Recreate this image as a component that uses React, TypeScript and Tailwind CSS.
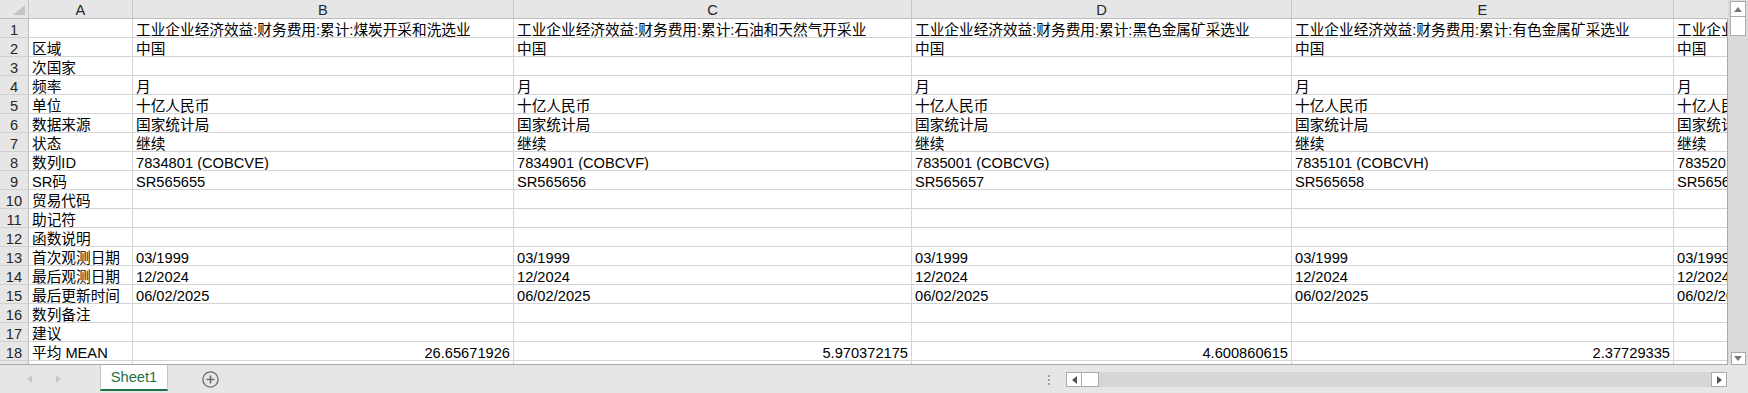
import React from "react";

const W = ["w-[104px]", "w-[381px]", "w-[398px]", "w-[380px]", "w-[382px]", "w-[382px]"];
const LETTERS = ["A", "B", "C", "D", "E", "F"];

const series = [
  { name: "煤炭开采和洗选业", id: "7834801 (COBCVE)", sr: "SR565655", mean: "26.65671926" },
  { name: "石油和天然气开采业", id: "7834901 (COBCVF)", sr: "SR565656", mean: "5.970372175" },
  { name: "黑色金属矿采选业", id: "7835001 (COBCVG)", sr: "SR565657", mean: "4.600860615" },
  { name: "有色金属矿采选业", id: "7835101 (COBCVH)", sr: "SR565658", mean: "2.37729335" },
  { name: "非金属矿采选业", id: "7835201 (COBCVI)", sr: "SR565659", mean: "1.084512307" },
];

const labels = [
  "",
  "区域",
  "次国家",
  "频率",
  "单位",
  "数据来源",
  "状态",
  "数列ID",
  "SR码",
  "贸易代码",
  "助记符",
  "函数说明",
  "首次观测日期",
  "最后观测日期",
  "最后更新时间",
  "数列备注",
  "建议",
  "平均 MEAN",
  "方差",
];

function valuesFor(s: (typeof series)[number]): string[] {
  return [
    "工业企业经济效益:财务费用:累计:" + s.name,
    "中国",
    "",
    "月",
    "十亿人民币",
    "国家统计局",
    "继续",
    s.id,
    s.sr,
    "",
    "",
    "",
    "03/1999",
    "12/2024",
    "06/02/2025",
    "",
    "",
    s.mean,
    "",
  ];
}

const colValues = series.map(valuesFor);

function Cell({ w, text, right }: { w: string; text: string; right?: boolean }) {
  return (
    <div
      className={`${w} shrink-0 h-[19px] border-r border-b border-[#d4d4d4] px-[3px] pt-[2px] leading-[18px] overflow-hidden whitespace-nowrap text-black ${
        right ? "text-right" : "text-left"
      }`}
    >
      {text}
    </div>
  );
}

function Row({ idx }: { idx: number }) {
  return (
    <div className="flex h-[19px]">
      <div className="w-[29px] shrink-0 h-[19px] bg-[#e6e6e6] border-r border-b border-r-[#bdbdbd] border-b-[#d0d0d0] text-center pt-[2px] leading-[18px] text-[#262626]">
        {idx + 1}
      </div>
      <Cell w={W[0]} text={labels[idx]} />
      {colValues.map((vals, c) => (
        <Cell key={c} w={W[c + 1]} text={vals[idx]} right={idx === 17} />
      ))}
    </div>
  );
}

function TriUp() {
  return (
    <svg width="8" height="5" viewBox="0 0 8 5">
      <path d="M0 5 L4 0 L8 5 Z" fill="#7a7a7a" />
    </svg>
  );
}
function TriDown() {
  return (
    <svg width="8" height="5" viewBox="0 0 8 5">
      <path d="M0 0 L4 5 L8 0 Z" fill="#7a7a7a" />
    </svg>
  );
}
function TriLeft({ color = "#555" }: { color?: string }) {
  return (
    <svg width="5" height="8" viewBox="0 0 5 8">
      <path d="M5 0 L0 4 L5 8 Z" fill={color} />
    </svg>
  );
}
function TriRight({ color = "#555" }: { color?: string }) {
  return (
    <svg width="5" height="8" viewBox="0 0 5 8">
      <path d="M0 0 L5 4 L0 8 Z" fill={color} />
    </svg>
  );
}

export default function App() {
  return (
    <div className="w-[1748px] h-[393px] overflow-hidden bg-[#e6e6e6] flex flex-col font-['Liberation_Sans','Noto_Sans_CJK_SC',sans-serif] text-[14.67px]">
      <div className="flex h-[365px] shrink-0">
        {/* grid */}
        <div className="w-[1728px] shrink-0 flex flex-col bg-white">
          <div className="flex h-[19px] shrink-0 overflow-hidden bg-[#e6e6e6]">
            <div className="w-[29px] shrink-0 h-[19px] border-r border-b border-r-[#c6c6c6] border-b-[#bdbdbd] flex items-start justify-end pt-[5px] pr-[3px]">
              <svg width="12" height="10" viewBox="0 0 12 10">
                <path d="M12 0 L12 10 L0 10 Z" fill="#c4c4c4" />
              </svg>
            </div>
            {LETTERS.map((l, i) => (
              <div
                key={l}
                className={`${W[i]} shrink-0 h-[19px] border-r border-b border-r-[#c6c6c6] border-b-[#bdbdbd] text-center pt-[1px] leading-[18px] text-[#262626]`}
              >
                {l}
              </div>
            ))}
          </div>
          <div className="flex-1 overflow-hidden border-r border-b border-[#a8a8a8] flex flex-col">
            {labels.map((_, i) => (
              <Row key={i} idx={i} />
            ))}
          </div>
        </div>
        {/* vertical scrollbar */}
        <div className="w-[20px] shrink-0 bg-[#dadada] flex flex-col items-center">
          <div className="mt-[1px] w-[16px] h-[16px] bg-white border border-[#ababab] flex items-center justify-center">
            <TriUp />
          </div>
          <div className="w-[16px] h-[19px] bg-white border border-t-0 border-[#ababab]" />
          <div className="flex-1" />
          <div className="w-[15px] h-[13px] bg-white border border-[#ababab] flex items-center justify-center">
            <TriDown />
          </div>
        </div>
      </div>

      {/* tab bar */}
      <div className="flex h-[28px] shrink-0 items-start">
        <div className="w-[100px] shrink-0 h-[26px] flex items-center pl-[27px] gap-[24px] pt-[1px]">
          <TriLeft color="#c8c8c8" />
          <TriRight color="#c8c8c8" />
        </div>
        <div className="w-[68px] shrink-0 h-[26px] bg-white border-x border-[#c6c6c6] border-b-2 border-b-[#217346] text-[#217346] text-center leading-[22px] pt-[1px]">
          Sheet1
        </div>
        <div className="ml-[34px] mt-[6px] w-[17px] h-[17px] shrink-0">
          <svg width="17" height="17" viewBox="0 0 17 17">
            <circle cx="8.5" cy="8.5" r="7.6" fill="none" stroke="#6a6a6a" strokeWidth="1.3" />
            <path d="M8.5 4.5 V12.5 M4.5 8.5 H12.5" stroke="#6a6a6a" strokeWidth="1.6" />
          </svg>
        </div>
        <div className="flex-1" />
        <div className="w-[21px] shrink-0 h-[28px] flex items-center pl-[3px]">
          <div className="flex flex-col gap-[2px] mt-[1px]">
            <div className="w-[2px] h-[2px] bg-[#a0a0a0]" />
            <div className="w-[2px] h-[2px] bg-[#a0a0a0]" />
            <div className="w-[2px] h-[2px] bg-[#a0a0a0]" />
          </div>
        </div>
        <div className="w-[661px] shrink-0 mt-[7px] h-[15px] flex">
          <div className="w-[16px] h-[15px] bg-white border border-[#ababab] flex items-center justify-center">
            <TriLeft />
          </div>
          <div className="w-[17px] h-[15px] bg-white border border-l-0 border-[#ababab]" />
          <div className="flex-1 h-[15px] bg-[#d6d6d6]" />
          <div className="w-[16px] h-[15px] bg-white border border-[#ababab] flex items-center justify-center">
            <TriRight />
          </div>
        </div>
        <div className="w-[21px] shrink-0" />
      </div>
    </div>
  );
}
